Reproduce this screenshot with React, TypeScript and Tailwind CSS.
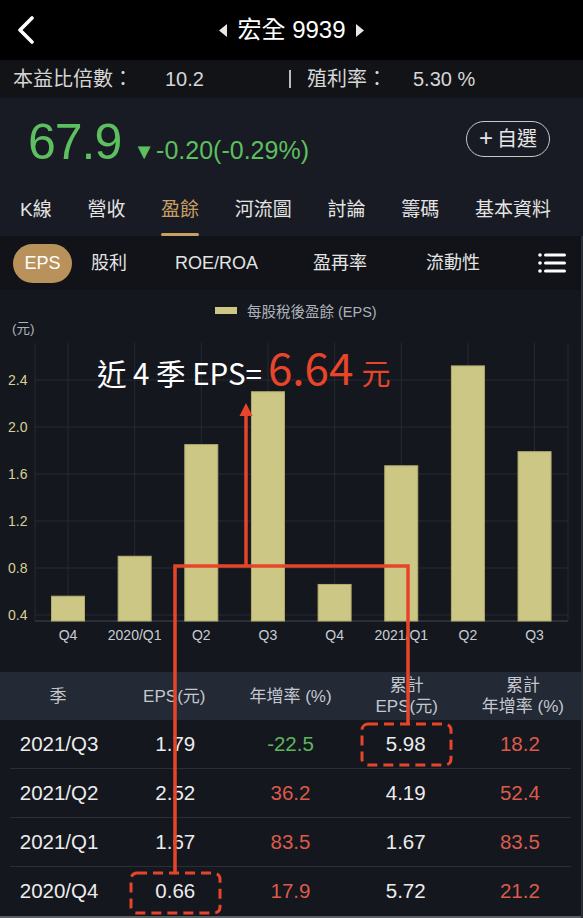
import React from "react";

const FONT = "font-['Liberation_Sans','Noto_Sans_CJK_TC',sans-serif]";

const bars = [
  { label: "Q4", v: 0.56 },
  { label: "2020/Q1", v: 0.9 },
  { label: "Q2", v: 1.85 },
  { label: "Q3", v: 2.3 },
  { label: "Q4", v: 0.66 },
  { label: "2021/Q1", v: 1.67 },
  { label: "Q2", v: 2.52 },
  { label: "Q3", v: 1.79 },
];

const yTicks = [2.4, 2.0, 1.6, 1.2, 0.8, 0.4];

const rows = [
  { q: "2021/Q3", eps: "1.79", yoy: "-22.5", cum: "5.98", cyoy: "18.2" },
  { q: "2021/Q2", eps: "2.52", yoy: "36.2", cum: "4.19", cyoy: "52.4" },
  { q: "2021/Q1", eps: "1.67", yoy: "83.5", cum: "1.67", cyoy: "83.5" },
  { q: "2020/Q4", eps: "0.66", yoy: "17.9", cum: "5.72", cyoy: "21.2" },
];

function yOf(v: number) {
  return 325 - (v - 0.4) * 117.5;
}

function Chart() {
  const svgFont = "Liberation Sans, Noto Sans CJK TC, sans-serif";
  return (
    <svg width="581" height="382" viewBox="0 0 581 382" className="block">
      <rect x="215" y="17" width="22" height="7" fill="#cdc785" />
      <text x="247" y="27" fontSize="14.5" fill="#aeb2ba" fontFamily={svgFont}>
        每股稅後盈餘 (EPS)
      </text>
      <text x="12" y="43" fontSize="13.5" fill="#aeb2ba" fontFamily={svgFont}>
        (元)
      </text>
      {yTicks.map((t) => (
        <g key={t}>
          <line x1="35" x2="568" y1={yOf(t)} y2={yOf(t)} stroke="#272b33" strokeWidth="1" />
          <text x="8" y={yOf(t) + 5} fontSize="14" fill="#d6d196" fontFamily={svgFont}>
            {t.toFixed(1)}
          </text>
        </g>
      ))}
      <line x1="35" x2="35" y1="53" y2="331" stroke="#272b33" strokeWidth="1" />
      <line x1="568" x2="568" y1="53" y2="331" stroke="#272b33" strokeWidth="1" />
      {bars.map((b, i) => {
        const cx = 68 + i * 66.65;
        return (
          <line key={"g" + i} x1={cx} x2={cx} y1="53" y2="331" stroke="#272b33" strokeWidth="1" />
        );
      })}
      <line x1="35" x2="568" y1="331" y2="331" stroke="#343841" strokeWidth="1.5" />
      {bars.map((b, i) => {
        const cx = 68 + i * 66.65;
        const top = yOf(b.v);
        return (
          <g key={"b" + i}>
            <rect
              x={cx - 16.5}
              y={top}
              width="33"
              height={331 - top}
              fill="#cdc785"
              stroke="#b3ad6e"
              strokeWidth="1"
            />
            <text
              x={cx}
              y="350"
              fontSize="14"
              fill="#c9cdd4"
              textAnchor="middle"
              fontFamily={svgFont}
            >
              {b.label}
            </text>
          </g>
        );
      })}
    </svg>
  );
}

function Overlay() {
  const red = "#e6452a";
  return (
    <svg
      width="583"
      height="918"
      viewBox="0 0 583 918"
      className="absolute left-0 top-0 pointer-events-none"
    >
      <polyline
        points="175,872 175,566 408,566 408,723"
        fill="none"
        stroke={red}
        strokeWidth="3.5"
        strokeLinejoin="miter"
      />
      <line x1="246" y1="566" x2="246" y2="412" stroke={red} strokeWidth="3.5" />
      <polygon points="239.5,416 246,403 252.5,416" fill={red} />
      <rect
        x="362"
        y="724"
        width="89"
        height="41"
        rx="6"
        fill="none"
        stroke={red}
        strokeWidth="3"
        strokeDasharray="10 6"
      />
      <rect
        x="131"
        y="873"
        width="89"
        height="40"
        rx="6"
        fill="none"
        stroke={red}
        strokeWidth="3"
        strokeDasharray="10 6"
      />
    </svg>
  );
}

export default function App() {
  const tabs = ["K線", "營收", "盈餘", "河流圖", "討論", "籌碼", "基本資料"];
  return (
    <div className={`relative w-[583px] h-[918px] overflow-hidden bg-[#14171e] ${FONT}`}>
      {/* Top bar */}
      <div className="h-[60px] bg-black grid grid-cols-[60px_1fr_60px] items-center">
        <div className="pl-[17px]">
          <svg width="18" height="28" viewBox="0 0 18 28">
            <polyline
              points="15,2 3,14 15,26"
              fill="none"
              stroke="#ffffff"
              strokeWidth="3.6"
              strokeLinecap="round"
              strokeLinejoin="round"
            />
          </svg>
        </div>
        <div className="flex items-center justify-center gap-[10px] text-white">
          <svg width="8" height="13" viewBox="0 0 8 13">
            <polygon points="8,0 0,6.5 8,13" fill="#e8e8e8" />
          </svg>
          <span className="text-[24px] leading-none">宏全 9939</span>
          <svg width="8" height="13" viewBox="0 0 8 13">
            <polygon points="0,0 8,6.5 0,13" fill="#e8e8e8" />
          </svg>
        </div>
        <div />
      </div>

      {/* Info row */}
      <div className="h-[38px] bg-[#121316] flex items-center text-[20px] text-[#d6d6d6] leading-none">
        <span className="pl-[13px] w-[165px]">本益比倍數：</span>
        <span className="w-[124px]">10.2</span>
        <span className="w-[2px] h-[18px] bg-[#bdbdbd] mr-[16px]" />
        <span className="w-[106px]">殖利率：</span>
        <span>5.30 %</span>
      </div>

      {/* Price */}
      <div className="h-[82px] bg-[#181b23] flex items-center justify-between pl-[28px] pr-[33px]">
        <div className="flex items-baseline text-[#5dbf5f] mt-[6px]">
          <span className="text-[50px] leading-none tracking-[-1px]">67.9</span>
          <span className="text-[25px] leading-none ml-[12px]">
            <span className="text-[22px] mr-[1px]">▼</span>-0.20(-0.29%)
          </span>
        </div>
        <div className="w-[84px] h-[36px] rounded-full border-[1.5px] border-[#c9c9c9] flex items-center justify-center text-[20px] text-[#e6e6e6] leading-none">
          <span className="font-light mr-[4px] text-[24px] leading-none -mt-[2px]">+</span>
          <span>自選</span>
        </div>
      </div>

      {/* Tabs */}
      <div className="h-[56px] bg-[#181b23] flex justify-between pl-[20px] pr-[32px] pt-[17px]">
        {tabs.map((t) => {
          const active = t === "盈餘";
          return (
            <div key={t} className="flex flex-col items-stretch">
              <span
                className={`text-[19px] leading-[26px] ${active ? "text-[#c9a063]" : "text-[#e4e4e4]"}`}
              >
                {t}
              </span>
              <span
                className={`mt-[10px] h-[3px] rounded-full ${active ? "bg-[#c9a063]" : "bg-transparent"}`}
              />
            </div>
          );
        })}
      </div>

      {/* Lower content with right edge strip */}
      <div className="border-r-2 border-[#2c2f36]">
        {/* Sub tabs */}
        <div className="h-[54px] bg-[#111319] flex items-center text-[18px] leading-none text-[#e4e4e4]">
          <div className="ml-[13px] w-[59px] h-[39px] rounded-full bg-[#b8925a] flex items-center justify-center text-white">
            EPS
          </div>
          <span className="ml-[19px]">股利</span>
          <span className="ml-[48px]">ROE/ROA</span>
          <span className="ml-[55px]">盈再率</span>
          <span className="ml-[59px]">流動性</span>
          <svg width="30" height="22" viewBox="0 0 30 22" className="ml-[58px]">
            <circle cx="2" cy="3" r="1.8" fill="#fff" />
            <circle cx="2" cy="11" r="1.8" fill="#fff" />
            <circle cx="2" cy="19" r="1.8" fill="#fff" />
            <rect x="6" y="1.5" width="22" height="3" rx="1.5" fill="#fff" />
            <rect x="6" y="9.5" width="22" height="3" rx="1.5" fill="#fff" />
            <rect x="6" y="17.5" width="22" height="3" rx="1.5" fill="#fff" />
          </svg>
        </div>

        {/* Chart */}
        <div className="h-[382px] bg-[#14171e]">
          <Chart />
        </div>

        {/* Table header */}
        <div className="h-[48px] bg-[#232935] grid grid-cols-5 items-center text-center text-[17px] leading-[21px] text-[#c3c7ce]">
          <div>季</div>
          <div>EPS(元)</div>
          <div>年增率 (%)</div>
          <div>
            累計
            <br />
            EPS(元)
          </div>
          <div>
            累計
            <br />
            年增率 (%)
          </div>
        </div>

        {/* Table rows */}
        <div className="bg-[#14171e] px-[10px]">
          {rows.map((r, i) => (
            <div
              key={r.q}
              className={`h-[49px] grid grid-cols-5 items-center text-center text-[20.5px] leading-none ${
                i < rows.length - 1 ? "border-b border-[#2a2e37]" : ""
              }`}
            >
              <div className="text-[#ececec] -ml-[14px]">{r.q}</div>
              <div className="text-[#ececec] -ml-[6px]">{r.eps}</div>
              <div className={r.yoy.startsWith("-") ? "text-[#5cb65c]" : "text-[#dd5a4a]"}>{r.yoy}</div>
              <div className="text-[#ececec] ml-[6px]">{r.cum}</div>
              <div className="text-[#dd5a4a] ml-[10px]">{r.cyoy}</div>
            </div>
          ))}
        </div>
        <div className="h-[2px] bg-[#5b5e64]" />
      </div>

      {/* Annotation overlay */}
      <Overlay />
      <div className="absolute left-[97px] top-[344px] flex items-baseline font-['Noto_Sans_CJK_TC',sans-serif] leading-none pointer-events-none">
        <span className="text-[29.5px] text-white">近 4 季 EPS=</span>
        <span className="text-[44px] text-[#e8452a] ml-[6px]">6.64</span>
        <span className="text-[29px] text-[#e8452a] ml-[8px]">元</span>
      </div>
    </div>
  );
}
